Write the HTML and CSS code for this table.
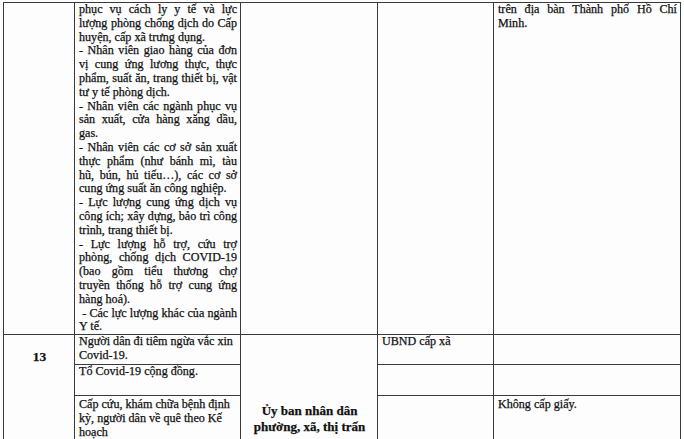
FILE: index.html
```html
<!DOCTYPE html>
<html lang="vi">
<head>
<meta charset="utf-8">
<title>Bảng</title>
<link rel="stylesheet" href="styles.css">
</head>
<body>
<table class="doc">
  <colgroup>
    <col class="c1"><col class="c2"><col class="c3"><col class="c4"><col class="c5">
  </colgroup>
  <tr class="r-cont">
    <td></td>
    <td class="txt just">phục vụ cách ly y tế và lực lượng phòng chống dịch do Cấp huyện, cấp xã trưng dụng.<br>- Nhân viên giao hàng của đơn vị cung ứng lương thực, thực phẩm, suất ăn, trang thiết bị, vật tư y tế phòng dịch.<br>- Nhân viên các ngành phục vụ sản xuất, cửa hàng xăng dầu, gas.<br>- Nhân viên các cơ sở sản xuất thực phẩm (như bánh mì, tàu hũ, bún, hủ tiếu…), các cơ sở cung ứng suất ăn công nghiệp.<br>- Lực lượng cung ứng dịch vụ công ích; xây dựng, bảo trì công trình, trang thiết bị.<br>- Lực lượng hỗ trợ, cứu trợ phòng, chống dịch COVID-19 (bao gồm tiểu thương chợ truyền thống hỗ trợ cung ứng hàng hoá).<br>&nbsp;- Các lực lượng khác của ngành Y tế.</td>
    <td></td>
    <td></td>
    <td class="txt just">trên địa bàn Thành phố Hồ Chí Minh.</td>
  </tr>
  <tr class="r-a">
    <td rowspan="3" class="num">13</td>
    <td class="txt">Người dân đi tiêm ngừa vắc xin Covid-19.</td>
    <td rowspan="3" class="org">Ủy ban nhân dân<br>phường, xã, thị trấn</td>
    <td class="txt">UBND cấp xã</td>
    <td></td>
  </tr>
  <tr class="r-b">
    <td class="txt">Tổ Covid-19 cộng đồng.</td>
    <td></td>
    <td></td>
  </tr>
  <tr class="r-c">
    <td class="txt pad">Cấp cứu, khám chữa bệnh định kỳ, người dân về quê theo Kế hoạch</td>
    <td></td>
    <td class="txt pad">Không cấp giấy.</td>
  </tr>
</table>
</body>
</html>
```

FILE: styles.css
```css
html, body {
  margin: 0;
  background: #fdfdfd;
}
body {
  padding: 2px 0 0 3px;
  font-family: "Liberation Serif", "Times New Roman", serif;
  font-size: 12.1px;
  line-height: 13.8px;
  color: #111;
  -webkit-text-stroke: 0.25px #111;
}
.doc {
  border-collapse: collapse;
  table-layout: fixed;
  width: 677px;
}
.c1 { width: 71px; }
.c2 { width: 166px; }
.c3 { width: 137px; }
.c4 { width: 116px; }
.c5 { width: 187px; }
.doc td {
  border: 1px solid #3a3a3a;
  padding: 0 3px 0 4px;
  vertical-align: top;
}
.r-cont { height: 331px; }
.r-a { height: 30px; }
.r-b { height: 31px; }
.r-c { height: 40px; }
.txt { padding-top: 1px; }
.just { text-align: justify; }
.pad { padding-top: 2px !important; }
.num {
  text-align: center;
  font-weight: bold;
  padding-top: 15px !important;
  font-size: 13.5px;
}
.org {
  text-align: center;
  vertical-align: bottom !important;
  font-weight: bold;
  font-size: 13px;
  line-height: 16px;
  padding-bottom: 5px !important;
}
```
